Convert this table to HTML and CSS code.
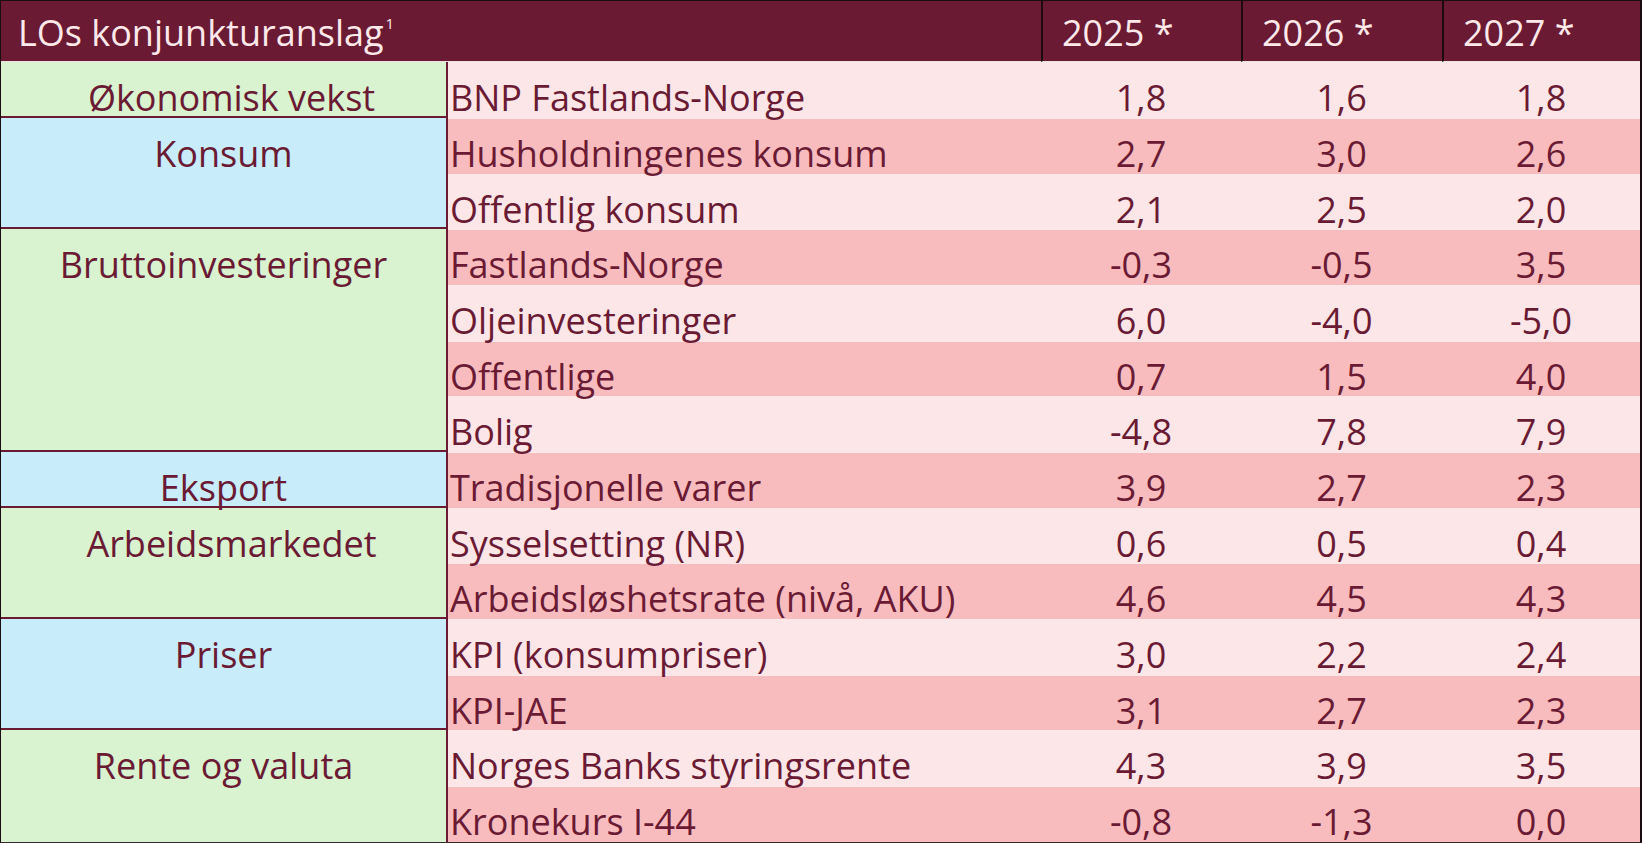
FILE: index.html
```html
<!DOCTYPE html>
<html lang="no">
<head>
<meta charset="utf-8">
<title>LOs konjunkturanslag</title>
<link rel="stylesheet" href="styles.css">
</head>
<body>
<div class="sheet">
<table class="forecast">
  <colgroup>
    <col class="c-group">
    <col class="c-name">
    <col class="c-y1">
    <col class="c-y2">
    <col class="c-y3">
  </colgroup>
  <thead>
    <tr>
      <th class="title" colspan="2">LOs konjunkturanslag<sup>1</sup></th>
      <th class="year">2025 *</th>
      <th class="year">2026 *</th>
      <th class="year">2027 *</th>
    </tr>
  </thead>
  <tbody>
    <tr class="light">
      <td class="group green indent">Økonomisk vekst</td>
      <td class="name">BNP Fastlands-Norge</td><td class="num">1,8</td><td class="num">1,6</td><td class="num">1,8</td>
    </tr>
    <tr class="dark">
      <td class="group blue" rowspan="2">Konsum</td>
      <td class="name">Husholdningenes konsum</td><td class="num">2,7</td><td class="num">3,0</td><td class="num">2,6</td>
    </tr>
    <tr class="light">
      <td class="name">Offentlig konsum</td><td class="num">2,1</td><td class="num">2,5</td><td class="num">2,0</td>
    </tr>
    <tr class="dark">
      <td class="group green" rowspan="4">Bruttoinvesteringer</td>
      <td class="name">Fastlands-Norge</td><td class="num">-0,3</td><td class="num">-0,5</td><td class="num">3,5</td>
    </tr>
    <tr class="light">
      <td class="name">Oljeinvesteringer</td><td class="num">6,0</td><td class="num">-4,0</td><td class="num">-5,0</td>
    </tr>
    <tr class="dark">
      <td class="name">Offentlige</td><td class="num">0,7</td><td class="num">1,5</td><td class="num">4,0</td>
    </tr>
    <tr class="light">
      <td class="name">Bolig</td><td class="num">-4,8</td><td class="num">7,8</td><td class="num">7,9</td>
    </tr>
    <tr class="dark">
      <td class="group blue">Eksport</td>
      <td class="name">Tradisjonelle varer</td><td class="num">3,9</td><td class="num">2,7</td><td class="num">2,3</td>
    </tr>
    <tr class="light">
      <td class="group green indent" rowspan="2">Arbeidsmarkedet</td>
      <td class="name">Sysselsetting (NR)</td><td class="num">0,6</td><td class="num">0,5</td><td class="num">0,4</td>
    </tr>
    <tr class="dark">
      <td class="name">Arbeidsløshetsrate (nivå, AKU)</td><td class="num">4,6</td><td class="num">4,5</td><td class="num">4,3</td>
    </tr>
    <tr class="light">
      <td class="group blue" rowspan="2">Priser</td>
      <td class="name">KPI (konsumpriser)</td><td class="num">3,0</td><td class="num">2,2</td><td class="num">2,4</td>
    </tr>
    <tr class="dark">
      <td class="name">KPI-JAE</td><td class="num">3,1</td><td class="num">2,7</td><td class="num">2,3</td>
    </tr>
    <tr class="light">
      <td class="group green last" rowspan="2">Rente og valuta</td>
      <td class="name">Norges Banks styringsrente</td><td class="num">4,3</td><td class="num">3,9</td><td class="num">3,5</td>
    </tr>
    <tr class="dark">
      <td class="name">Kronekurs I-44</td><td class="num">-0,8</td><td class="num">-1,3</td><td class="num">0,0</td>
    </tr>
  </tbody>
</table>
</div>
</body>
</html>
```
FILE: styles.css
```css
html, body {
  margin: 0;
  padding: 0;
  background: #ffffff;
}

.sheet {
  width: 1642px;
  height: 843px;
  box-sizing: border-box;
  border-top: 1px solid #1a0d12;
  border-left: 1px solid #1a0d12;
  border-right: 2px solid #1a0d12;
  border-bottom: 1px solid #3a2a30;
  font-family: "Open Sans", "Noto Sans", sans-serif;
}

.forecast {
  width: 1639px;
  table-layout: fixed;
  border-collapse: separate;
  border-spacing: 0;
}

.c-group { width: 447px; }
.c-name { width: 593px; }
.c-y1 { width: 200px; }
.c-y2 { width: 201px; }
.c-y3 { width: 198px; }

.forecast th {
  height: 61px;
  box-sizing: border-box;
  padding: 0;
  background: #6a1a33;
  color: #fde8ea;
  font-weight: 400;
  font-size: 36px;
  line-height: 1;
  text-align: left;
  vertical-align: top;
  padding-top: 14px;
  border-bottom: 1px solid #f1dde1;
}

.forecast th.title {
  padding-left: 17px;
}

.forecast th sup {
  font-size: 15px;
  vertical-align: top;
  position: relative;
  top: 1px;
  margin-left: 2px;
}

.forecast th.year {
  border-left: 2px solid #1c0c12;
  padding-left: 19px;
}

.forecast td {
  height: 55.64px;
  box-sizing: border-box;
  padding: 17px 0 0 0;
  font-size: 36px;
  line-height: 1;
  color: #6a1a33;
  vertical-align: top;
  white-space: nowrap;
}

.light td { background: #fde6e8; }
.dark td { background: #f8bcbf; }

.forecast td.name,
.forecast td.num {
  border-top: 1px solid #fbe9ea;
}

.forecast td.name {
  padding-left: 2px;
}

.forecast td.num {
  text-align: center;
}

.forecast td.group {
  padding-top: 18px;
  text-align: center;
  border-right: 2px solid #6a1a33;
  border-bottom: 2px solid #6a1a33;
}

.forecast td.group.indent {
  padding-left: 16px;
}

.forecast td.group.last {
  border-bottom: 0;
}

.forecast td.green { background: #d9f2d0; }
.forecast td.blue { background: #c8ecfa; }
```
